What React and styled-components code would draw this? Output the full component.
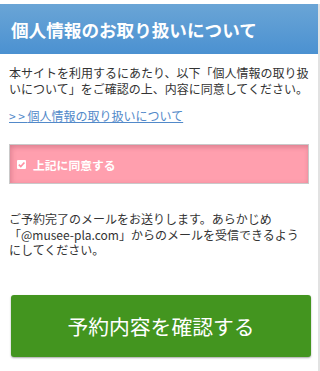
import styled, { createGlobalStyle } from "styled-components";

const GlobalStyle = createGlobalStyle`
  body {
    margin: 0;
    background: #fff;
    font-family: "Noto Sans CJK JP", "Noto Sans", sans-serif;
    color: #333;
  }
`;

const Page = styled.div`
  margin-top: 4px;
  width: 318px;
  border-right: 2px solid #e2e2e2;
  padding-bottom: 14px;
`;

const Header = styled.h1`
  margin: 0;
  height: 50px;
  display: flex;
  align-items: center;
  padding: 0 11px;
  background: linear-gradient(#6aa5d6, #4b91d1);
  color: #fff;
  font-size: 17.6px;
  font-weight: 700;
`;

const Content = styled.div`
  padding: 0 9px;
`;

const Text = styled.p`
  margin: ${(p) => p.$top}px 0 0;
  font-size: 12px;
  line-height: ${(p) => p.$lh || 16}px;
  color: #333;
`;

const Link = styled.a`
  display: block;
  margin-top: 11px;
  font-size: 12px;
  line-height: 16px;
  color: #5289c9;
  text-decoration: underline;
`;

const Arrows = styled.span`
  letter-spacing: 2.6px;
`;

const AgreeBox = styled.label`
  display: flex;
  align-items: center;
  gap: 7px;
  margin-top: 20px;
  height: 38px;
  padding: 0 7px;
  background: #ff9fae;
  border: 1px solid #c9c9c9;
  box-shadow: inset 0 3px 4px rgba(120, 40, 60, 0.18),
    inset 3px 0 4px rgba(120, 40, 60, 0.1);
  color: #fff;
  font-size: 11.8px;
  font-weight: 700;
`;

const Check = styled.span`
  display: inline-flex;
  width: 9px;
  height: 9px;
  margin-top: 1px;
  background: #fff;
  border-radius: 1px;
`;

const ConfirmButton = styled.button`
  display: block;
  margin: 37px 0 0 2px;
  width: 300px;
  height: 62px;
  border: none;
  border-radius: 3px;
  background: #43951f;
  box-shadow: 0 1px 2px rgba(0, 0, 0, 0.35);
  color: #fff;
  font-family: "Noto Sans CJK JP", "Noto Sans", sans-serif;
  font-size: 20.8px;
  font-weight: 400;
  cursor: pointer;
`;

export default function App() {
  return (
    <>
      <GlobalStyle />
      <Page>
        <Header>個人情報のお取り扱いについて</Header>
        <Content>
          <Text $top={11}>
            本サイトを利用するにあたり、以下「個人情報の取り扱いについて」をご確認の上、内容に同意してください。
          </Text>
          <Link href="#">
            <Arrows>&gt;&gt;</Arrows>個人情報の取り扱いについて
          </Link>
          <AgreeBox>
            <Check>
              <svg width="9" height="9" viewBox="0 0 9 9">
                <path
                  d="M1.8 4.6 L3.8 6.6 L7.4 2.4"
                  fill="none"
                  stroke="#ff8fa2"
                  strokeWidth="1.6"
                />
              </svg>
            </Check>
            上記に同意する
          </AgreeBox>
          <Text $top={27} $lh={15.5}>
            ご予約完了のメールをお送りします。あらかじめ「@musee-pla.com」からのメールを受信できるようにしてください。
          </Text>
          <ConfirmButton>予約内容を確認する</ConfirmButton>
        </Content>
      </Page>
    </>
  );
}
